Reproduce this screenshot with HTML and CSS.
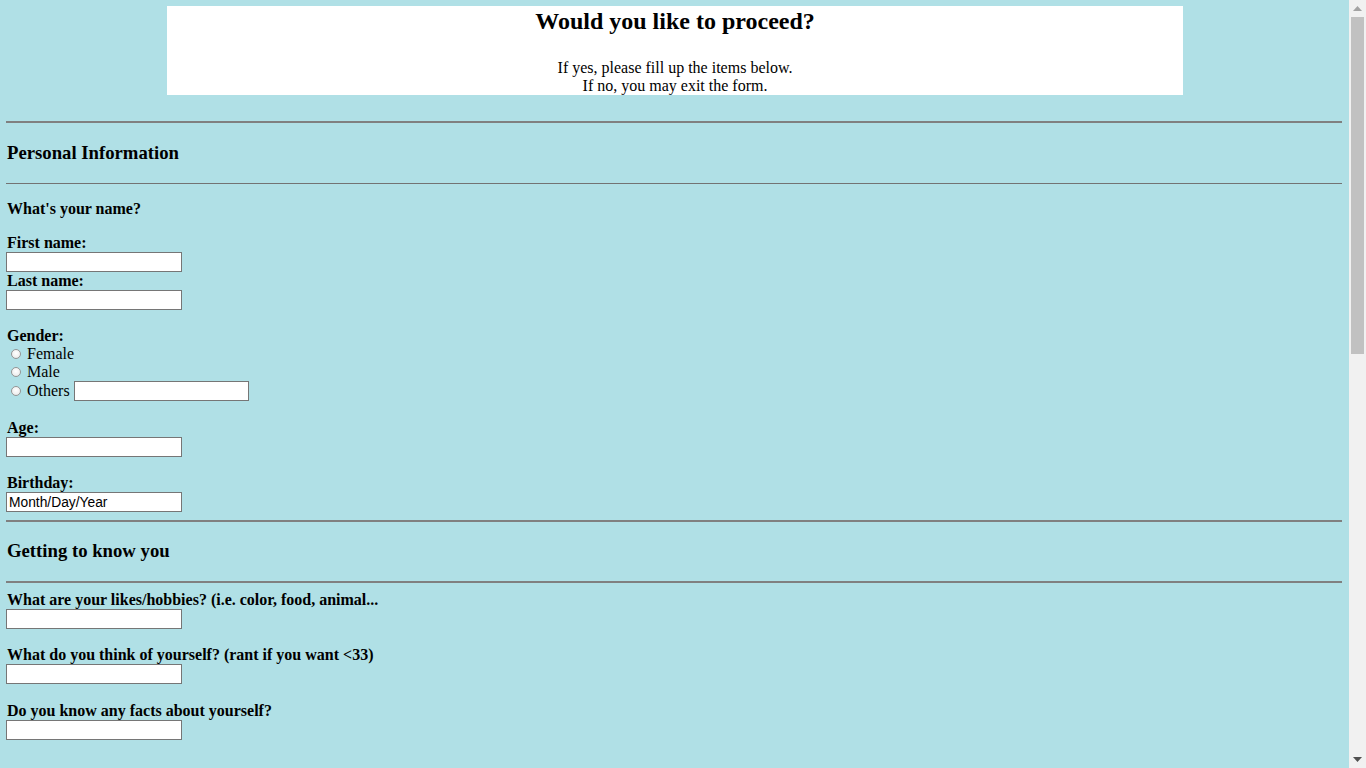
FILE: index.html
```html
<!DOCTYPE html>
<html lang="en">
<head>
<meta charset="utf-8">
<title>Form</title>
<link rel="stylesheet" href="styles.css">
</head>
<body>
<div class="page">
  <div class="intro">
    <h2 class="intro-title">Would you like to proceed?</h2>
    <p class="intro-text">If yes, please fill up the items below.<br>If no, you may exit the form.</p>
  </div>

  <hr class="rule rule-thick rule-first">
  <h3 class="section-title">Personal Information</h3>
  <hr class="rule rule-thin">

  <div class="field gap-16"><span class="label">What's your name?</span></div>

  <div class="field gap-16">
    <label class="label" for="fname">First name:</label>
    <input class="text-input" id="fname" type="text">
    <label class="label" for="lname">Last name:</label>
    <input class="text-input" id="lname" type="text">
  </div>

  <div class="field gap-17">
    <span class="label">Gender:</span>
    <label class="radio-row"><input class="radio" type="radio" name="gender">Female</label>
    <label class="radio-row"><input class="radio" type="radio" name="gender">Male</label>
    <label class="radio-row radio-row-other"><input class="radio" type="radio" name="gender">Others<input class="text-input other-input" type="text"></label>
  </div>

  <div class="field gap-18">
    <label class="label" for="age">Age:</label>
    <input class="text-input" id="age" type="text">
  </div>

  <div class="field gap-17">
    <label class="label" for="bday">Birthday:</label>
    <input class="text-input" id="bday" type="text" value="Month/Day/Year">
  </div>

  <hr class="rule rule-thick gap-8">
  <h3 class="section-title section-title-2">Getting to know you</h3>
  <hr class="rule rule-thick">

  <div class="field gap-8">
    <label class="label" for="q1">What are your likes/hobbies? (i.e. color, food, animal...</label>
    <input class="text-input" id="q1" type="text">
  </div>

  <div class="field gap-17">
    <label class="label" for="q2">What do you think of yourself? (rant if you want &lt;33)</label>
    <input class="text-input" id="q2" type="text">
  </div>

  <div class="field gap-18">
    <label class="label" for="q3">Do you know any facts about yourself?</label>
    <input class="text-input" id="q3" type="text">
  </div>
</div>

<div class="scrollbar" aria-hidden="true">
  <div class="scroll-btn">
    <svg width="9" height="5" viewBox="0 0 9 5"><polygon points="0,5 4.5,0 9,5" fill="#a3a3a3"/></svg>
  </div>
  <div class="scroll-track"><div class="scroll-thumb"></div></div>
  <div class="scroll-btn">
    <svg width="9" height="5" viewBox="0 0 9 5"><polygon points="0,0 4.5,5 9,0" fill="#505050"/></svg>
  </div>
</div>
</body>
</html>
```

FILE: styles.css
```css
html {
  background: #b0e0e6;
  scrollbar-width: none;
}

html::-webkit-scrollbar {
  display: none;
}

body {
  margin: 6px 24px 6px 6px;
  background: #b0e0e6;
  color: #000;
  font-family: "Liberation Serif", "Times New Roman", serif;
  font-size: 16px;
  line-height: 18px;
}

.page {
  min-height: 1661px;
}

.intro {
  width: 1016px;
  margin: 0 0 0 calc(50% - 507px);
  background: #fff;
  text-align: center;
}

.intro-title {
  margin: 0;
  font-size: 24px;
  line-height: 31px;
  font-weight: bold;
}

.intro-text {
  margin: 22px 0 0;
}

.rule {
  margin: 0;
  border: 0;
  height: 0;
}

.rule-thick {
  border-top: 2px solid #808080;
}

.rule-thin {
  border-top: 1px solid #737373;
}

.rule-first {
  margin-top: 26px;
}

.section-title {
  margin: 19px 0 19px 1px;
  font-size: 18.72px;
  line-height: 22px;
  font-weight: bold;
}

.section-title-2 {
  margin-top: 18px;
}

.field {
  display: flex;
  flex-direction: column;
  align-items: flex-start;
}

.gap-8 { margin-top: 8px; }
.gap-16 { margin-top: 16px; }
.gap-17 { margin-top: 17px; }
.gap-18 { margin-top: 18px; }

.label {
  display: block;
  margin-left: 1px;
  font-weight: bold;
  line-height: 18px;
}

.text-input {
  box-sizing: border-box;
  width: 176px;
  height: 20px;
  margin: 0;
  padding: 1px 2px;
  border: 1px solid #767676;
  border-radius: 0;
  background: #fff;
  color: #000;
  font-family: "Liberation Sans", Arial, sans-serif;
  font-size: 13.8px;
  line-height: 16px;
  outline: none;
}

.radio-row {
  display: flex;
  align-items: center;
  height: 18px;
}

.radio-row-other {
  height: 20px;
}

.radio {
  -webkit-appearance: none;
  appearance: none;
  box-sizing: border-box;
  width: 10px;
  height: 10px;
  margin: 0 6px 0 5px;
  border: 1px solid #959595;
  border-radius: 50%;
  background: radial-gradient(circle at 50% 40%, #ffffff 0%, #f0f0f0 60%, #dedede 100%);
}

.other-input {
  width: 175px;
  margin-left: 4px;
}

.scrollbar {
  position: fixed;
  top: 0;
  right: 0;
  width: 17px;
  height: 100vh;
  display: flex;
  flex-direction: column;
  background: #f1f1f1;
}

.scroll-btn {
  height: 17px;
  flex: none;
  display: flex;
  align-items: center;
  justify-content: center;
}

.scroll-track {
  flex: 1;
}

.scroll-thumb {
  height: 337px;
  margin: 0 2px;
  background: #c1c1c1;
}
```
